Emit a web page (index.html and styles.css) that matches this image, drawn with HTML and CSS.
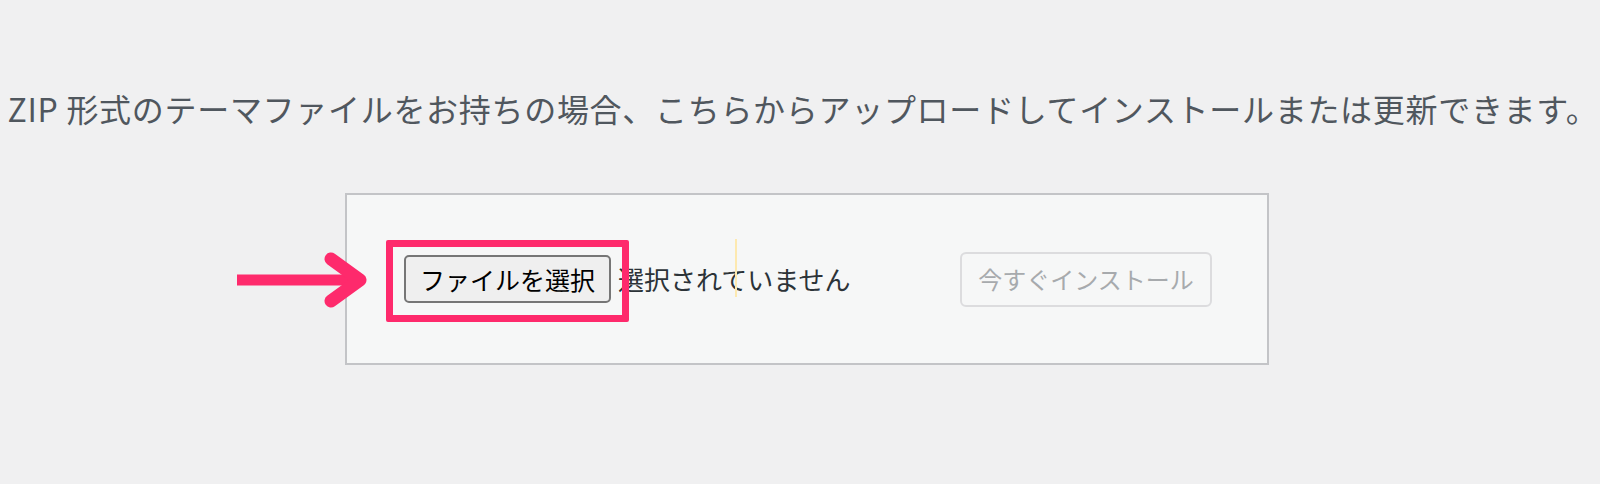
FILE: index.html
```html
<!DOCTYPE html>
<html lang="ja">
<head>
<meta charset="utf-8">
<title>テーマのアップロード</title>
<link rel="stylesheet" href="styles.css">
</head>
<body>
  <div class="upload-theme">
    <p class="install-help">ZIP 形式のテーマファイルをお持ちの場合、こちらからアップロードしてインストールまたは更新できます。</p>
    <form class="wp-upload-form">
      <svg class="annot-arrow" width="140" height="60" viewBox="0 0 140 60" aria-hidden="true">
        <path d="M7 30 H128" stroke="#fe2a6c" stroke-width="11" stroke-linecap="butt" fill="none"/>
        <path d="M101 9 L130 30 L101 51" stroke="#fe2a6c" stroke-width="13" stroke-linecap="round" stroke-linejoin="round" fill="none"/>
      </svg>
      <div class="annot-box"></div>
      <span class="cursor-line"></span>
      <div class="file-input">
        <span class="file-btn">ファイルを選択</span>
        <span class="file-label">選択されていません</span>
      </div>
      <span class="btn-install">今すぐインストール</span>
    </form>
  </div>
</body>
</html>
```

FILE: styles.css
```css
html, body {
  margin: 0;
  padding: 0;
  background: #f0f0f1;
}

body {
  font-family: "Noto Sans CJK JP", "Noto Sans", sans-serif;
  color: #50575e;
  width: 1600px;
  height: 484px;
  overflow: hidden;
}

.upload-theme {
  display: flex;
  flex-direction: column;
  align-items: center;
}

.install-help {
  margin: 84px 0 0 6px;
  font-size: 32px;
  line-height: 48px;
  letter-spacing: 0.7px;
  color: #50575e;
  white-space: nowrap;
  text-align: center;
}

.wp-upload-form {
  position: relative;
  box-sizing: border-box;
  width: 924px;
  height: 172px;
  margin: 61px 0 0 14px;
  background: #f6f7f7;
  border: 2px solid #c3c4c7;
  display: flex;
  align-items: center;
  padding: 0 55px 0 57px;
}

.file-input {
  display: flex;
  align-items: center;
  gap: 7px;
}

.file-btn {
  box-sizing: border-box;
  width: 207px;
  height: 48px;
  display: flex;
  align-items: center;
  justify-content: center;
  background: #efefef;
  border: 2px solid #767676;
  border-radius: 5px;
  color: #000;
  font-size: 25px;
  line-height: 1;
}

.file-label {
  color: #2c3338;
  font-size: 26px;
  line-height: 1;
  white-space: nowrap;
}

.btn-install {
  margin-left: auto;
  box-sizing: border-box;
  width: 252px;
  height: 55px;
  display: flex;
  align-items: center;
  justify-content: center;
  background: #f6f7f7;
  border: 2px solid #dcdcde;
  border-radius: 6px;
  color: #a7aaad;
  font-size: 24px;
  line-height: 1;
  white-space: nowrap;
}

.annot-box {
  position: absolute;
  left: 39px;
  top: 45px;
  width: 243px;
  height: 82px;
  box-sizing: border-box;
  border: 7px solid #fe2a6c;
  border-radius: 2px;
  pointer-events: none;
}

.annot-arrow {
  position: absolute;
  left: -117px;
  top: 55px;
}

.cursor-line {
  position: absolute;
  left: 388px;
  top: 44px;
  width: 2px;
  height: 58px;
  background: #fde9b0;
}
```
